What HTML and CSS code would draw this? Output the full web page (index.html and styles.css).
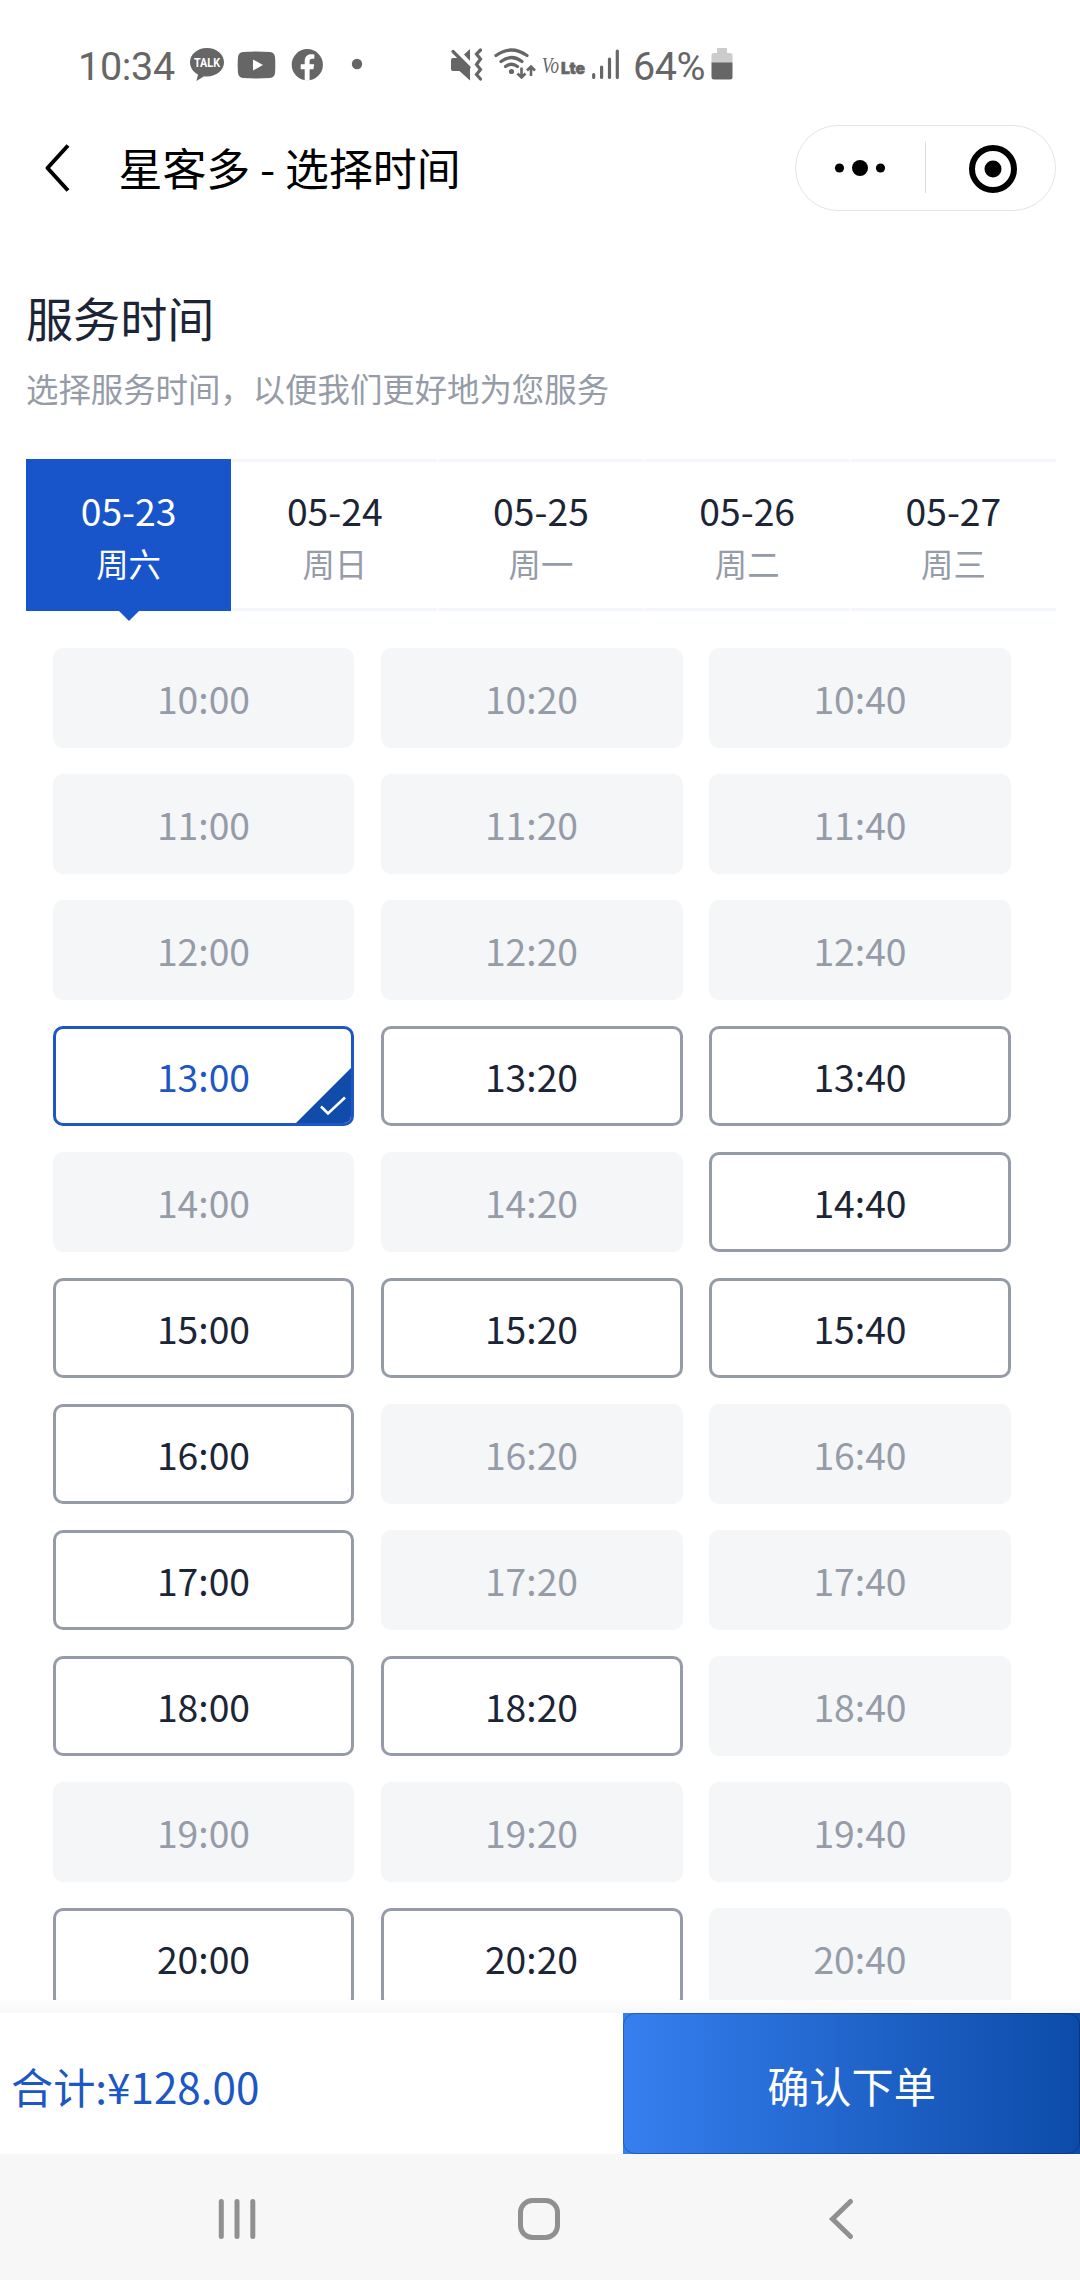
FILE: index.html
```html
<!DOCTYPE html>
<html lang="zh-CN">
<head>
<meta charset="utf-8">
<title>星客多 - 选择时间</title>
<link rel="stylesheet" href="styles.css">
</head>
<body>
<div class="phone">
  <header class="status">
    <span class="clock">10:34</span>
    <svg class="apps" width="180" height="40" viewBox="186 44 180 40">
      <path d="M207 48c-9.600 0-17 6.300-17 14.300 0 5.300 3.200 9.700 8 12.200L196.500 81l7.600-4.700c1 .2 1.900.2 2.900.2 9.600 0 17-6.200 17-14.200S216.600 48 207 48z"/>
      <text class="talk" x="207" y="67" text-anchor="middle" textLength="26" lengthAdjust="spacingAndGlyphs">TALK</text>
      <path d="M243 52q13.500-1 27 0 4.500.4 5 5 .6 8 0 16-.5 4.600-5 5-13.500.9-27 0-4.500-.4-5-5-.6-8 0-16 .5-4.600 5-5z"/>
      <path class="knock" d="M253 59.500v11l10-5.500z"/>
      <circle cx="307.300" cy="64.700" r="15.600"/>
      <path class="knock" d="M304.700 80.500V69.200h-4v-4.900h4v-3.200c0-4.700 2.700-6.900 6.600-6.900 1.200 0 2.300.1 3 .3v4.300h-2.200c-2 0-2.500 1-2.500 2.500v3h4.600l-.8 4.900h-3.800v11.300z"/>
      <circle cx="357" cy="64" r="5.200"/>
    </svg>
    <svg class="signals" width="178" height="40" viewBox="447 44 178 40">
      <path d="M451 60q0-2 2-2h7.500L470 67.500v13L459.500 71H453q-2 0-2-2z"/>
      <path d="M464 54.500L470 49v12z"/>
      <path class="line" d="M453 51.500L469 67.500"/>
      <path class="line" d="M480.500 50l-4 4 4 5-4 5.500 4 5-4 5 4 4.500"/>
      <path class="line" d="M496 55.500q15-11 31 0M501 61.500q10.500-8 21 0M505.500 66.500q6-4.500 12 0"/>
      <circle cx="511.500" cy="71.500" r="2.600"/>
      <path class="thin" d="M521.500 67.500v10m-4-4l4 4 4-4M531 76V67m-4 3.500l4-4 4 4"/>
      <text class="vo" x="542" y="73" textLength="17" lengthAdjust="spacingAndGlyphs">Vo</text>
      <text class="lte" x="561" y="73.500" textLength="24" lengthAdjust="spacingAndGlyphs">Lte</text>
      <path class="line" d="M593.700 74.500v3M601.600 67v10.500M609.500 59v18.500M617.300 51v26.500"/>
    </svg>
    <span class="percent">64%</span>
    <svg class="battery" width="22" height="34" viewBox="0 0 22 34">
      <path class="spent" d="M6 1h10v5h3q2.500 0 2.500 2.500V16H.5V8.500Q.5 6 3 6h3z"/>
      <path d="M.5 15.500h21V30q0 2.500-2.500 2.500H3Q.5 32.500.5 30z"/>
    </svg>
  </header>

  <nav class="titlebar">
    <svg class="back" width="28" height="50" viewBox="0 0 28 50"><path d="M25 2.500L4.500 25 25 47.500"/></svg>
    <h1 class="title">星客多 - 选择时间</h1>
    <div class="capsule">
      <svg width="259" height="84" viewBox="796 126 259 84">
        <circle cx="839.500" cy="168" r="4.600"/><circle cx="860" cy="168" r="8"/><circle cx="880.500" cy="168" r="4.600"/>
        <path class="divider" d="M925.500 142v51"/>
        <circle class="ring" cx="993" cy="169" r="21"/><circle cx="993" cy="169" r="8.500"/>
      </svg>
    </div>
  </nav>

  <main class="content">
    <h2 class="heading">服务时间</h2>
    <p class="hint">选择服务时间，以便我们更好地为您服务</p>
    <div class="dates">
      <div class="date active"><span class="day">05-23</span><span class="week">周六</span></div>
      <div class="date"><span class="day">05-24</span><span class="week">周日</span></div>
      <div class="date"><span class="day">05-25</span><span class="week">周一</span></div>
      <div class="date"><span class="day">05-26</span><span class="week">周二</span></div>
      <div class="date"><span class="day">05-27</span><span class="week">周三</span></div>
    </div>
    <div class="slots">
      <div class="slot">10:00</div><div class="slot">10:20</div><div class="slot">10:40</div>
      <div class="slot">11:00</div><div class="slot">11:20</div><div class="slot">11:40</div>
      <div class="slot">12:00</div><div class="slot">12:20</div><div class="slot">12:40</div>
      <div class="slot open chosen">13:00<svg class="tick" width="55" height="55" viewBox="0 0 55 55"><path class="corner" d="M55 0v55H0z"/><path class="check" d="M25 38.500l7 7L49 29.500"/></svg></div><div class="slot open">13:20</div><div class="slot open">13:40</div>
      <div class="slot">14:00</div><div class="slot">14:20</div><div class="slot open">14:40</div>
      <div class="slot open">15:00</div><div class="slot open">15:20</div><div class="slot open">15:40</div>
      <div class="slot open">16:00</div><div class="slot">16:20</div><div class="slot">16:40</div>
      <div class="slot open">17:00</div><div class="slot">17:20</div><div class="slot">17:40</div>
      <div class="slot open">18:00</div><div class="slot open">18:20</div><div class="slot">18:40</div>
      <div class="slot">19:00</div><div class="slot">19:20</div><div class="slot">19:40</div>
      <div class="slot open">20:00</div><div class="slot open">20:20</div><div class="slot">20:40</div>
    </div>
  </main>

  <footer class="checkout">
    <div class="total">合计:¥128.00</div>
    <div class="confirm"><span class="confirm-face">确认下单</span></div>
  </footer>

  <div class="sysnav">
    <svg width="1080" height="126" viewBox="0 2154 1080 126">
      <path d="M221.300 2201.500v35M237 2201.500v35M252.800 2201.500v35"/>
      <rect x="520.500" y="2200.500" width="37" height="37" rx="12"/>
      <path d="M850.500 2201.500L832.500 2219l18 17.500"/>
    </svg>
  </div>
</div>
</body>
</html>
```
FILE: styles.css
```css
* { box-sizing: border-box; }

body {
  margin: 0;
  background: #fff;
  font-family: "Noto Sans CJK SC", sans-serif;
  font-weight: 400;
}

.phone {
  display: flex;
  flex-direction: column;
  width: 1080px;
  height: 2280px;
  overflow: hidden;
}

/* Status bar */
.status {
  display: flex;
  align-items: center;
  height: 124px;
  padding: 4px 0 0 78px;
  color: #666;
  fill: #666;
  font: 39.5px/1 Roboto, sans-serif;
}
.clock { width: 108px; padding-top: 5px; letter-spacing: -.3px; }
.status svg { flex: none; }
.signals { margin-left: 81px; }
.percent { width: 78px; margin-left: 8px; padding-top: 5px; letter-spacing: -.5px; white-space: nowrap; }
.knock { fill: #fff; }
.talk { fill: #fff; font: bold 12.500px Roboto, sans-serif; }
.line { fill: none; stroke: #666; stroke-width: 3.2; stroke-linecap: round; }
.thin { fill: none; stroke: #666; stroke-width: 2.6; }
.vo { font: italic 23px "Liberation Serif", serif; }
.lte { font: 900 16px Inter, sans-serif; stroke: #666; stroke-width: .6; }
.spent { fill: #ccc; }

/* Title bar */
.titlebar {
  display: flex;
  align-items: center;
  height: 88px;
  padding: 0 24px 0 43px;
}
.back { fill: none; stroke: #000; stroke-width: 4; stroke-linejoin: round; }
.title {
  flex: 1;
  margin: -2px 0 0 47.500px;
  color: #000;
  font-size: 43.9px;
  font-weight: 400;
  line-height: 64px;
}
.capsule {
  width: 261px;
  height: 86px;
  border: 1px solid #e4e4e4;
  border-radius: 43px;
}
.capsule svg { display: block; }
.divider { stroke: #ddd; stroke-width: 1; }
.ring { fill: none; stroke: #000; stroke-width: 6; }

/* Page content */
.content {
  flex: none;
  height: 1788px;
  padding: 70px 24px 0 26px;
  overflow: hidden;
}
.heading {
  margin: 0;
  color: #1c2536;
  font-size: 47.1px;
  font-weight: 400;
  line-height: 70px;
}
.hint {
  margin: 12px 0 48px;
  color: #959ca8;
  font-size: 32.4px;
  line-height: 47px;
}
.dates {
  display: grid;
  grid-template-columns: repeat(5, 1fr);
  gap: 1px;
  height: 152px;
}
.date {
  position: relative;
  display: flex;
  flex-direction: column;
  align-items: center;
  padding-top: 21px;
  border: solid #f3f6fb;
  border-width: 3px 0;
  color: #1c2536;
}
.day { font-size: 37.3px; line-height: 54px; }
.week { color: #959ca8; font-size: 32.4px; line-height: 52px; }
.active { border-color: #1955ca; background: #1955ca; color: #fff; }
.active .week { color: #fff; }
.active::after {
  content: "";
  position: absolute;
  top: 149px;
  border: solid transparent;
  border-width: 10px 10px 0;
  border-top-color: #1955ca;
}

/* Time slots */
.slots {
  display: grid;
  grid-template-columns: 301px 302px 302px;
  grid-auto-rows: 100px;
  gap: 26px 26.500px;
  padding: 37px 0 0 27px;
}
.slot {
  position: relative;
  border: 3px solid #f4f6f8;
  border-radius: 10px;
  background: #f4f6f8;
  color: #959ca8;
  font-size: 37.3px;
  line-height: 94px;
  text-align: center;
}
.open { border-color: #959ca8; background: #fff; color: #1c2536; }
.chosen { border-color: #1d57c4; color: #1d57c4; }
.tick { position: absolute; right: 0; bottom: 0; border-bottom-right-radius: 7px; }
.corner { fill: #104daa; }
.check { fill: none; stroke: #fff; stroke-width: 2.6; }

/* Checkout bar */
.checkout {
  display: flex;
  height: 154px;
  padding-top: 13px;
  background: linear-gradient(#fdfdfd, #f8f8f8) top / 100% 13px no-repeat;
}
.total {
  width: 623px;
  padding-left: 11px;
  background: #fff;
  color: #1d57c4;
  font-size: 42.2px;
  line-height: 145px;
}
.confirm {
  flex: 1;
  background: linear-gradient(90deg, #367fef, #0c4ba8);
}
.confirm-face {
  display: block;
  height: 141px;
  border: 1px solid rgba(0, 0, 0, .25);
  border-radius: 12px;
  color: #fff;
  font-size: 42.2px;
  line-height: 142px;
  text-align: center;
}

/* System navigation */
.sysnav { height: 126px; background: #f7f7f7; }
.sysnav svg {
  display: block;
  fill: none;
  stroke: #909090;
  stroke-width: 5;
  stroke-linecap: round;
}
```
